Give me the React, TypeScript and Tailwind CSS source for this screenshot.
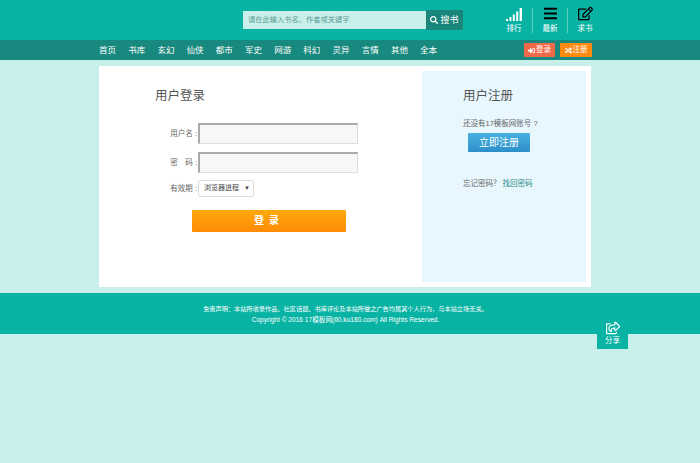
// Login page: teal header + nav, white card with login form and register panel, footer
import { FaSearch, FaBars, FaRegEdit, FaSignInAlt, FaRandom, FaRegShareSquare } from 'react-icons/fa';

const FONT = "font-['Liberation_Sans','Noto_Sans_CJK_SC',sans-serif]";

const NAV_ITEMS = ['首页', '书库', '玄幻', '仙侠', '都市', '军史', '网游', '科幻', '灵异', '言情', '其他', '全本'];

function SignalIcon() {
    return (
        <svg width="16" height="13" viewBox="0 0 16 13" fill="#fff">
            <rect x="0" y="11" width="2" height="2" />
            <rect x="3.4" y="9" width="2" height="4" />
            <rect x="6.8" y="6.5" width="2" height="6.5" />
            <rect x="10.2" y="3.5" width="2" height="9.5" />
            <rect x="13.6" y="0" width="2.4" height="13" />
        </svg>
    );
}

function TopLink({ icon, label, wide }: { icon: React.ReactNode; label: string; wide?: boolean }) {
    return (
        <div className={`${wide ? 'w-[36px]' : 'w-[34px]'} flex flex-col items-center`}>
            <div className="h-[14px] flex items-end">{icon}</div>
            <span className="mt-[3px] text-[7.5px] leading-[10px] text-white">{label}</span>
        </div>
    );
}

function Divider() {
    return <div className="w-px h-[25px] bg-[#5fd0c5]" />;
}

function FormRow({ label, children }: { label: string; children: React.ReactNode }) {
    return (
        <div className="flex items-center">
            <span className="w-[43px] pr-[1px] text-right text-[7.5px] whitespace-pre text-[#666]">{label}</span>
            {children}
        </div>
    );
}

function TextField() {
    return (
        <input
            type="text"
            className="w-[160px] h-[21px] bg-[#f7f7f7] border border-[#ddd] border-t-[#aaa] border-l-[#aaa] border-t-2 border-l-2"
        />
    );
}

export default function App() {
    return (
        <div className={`${FONT} w-[700px] h-[463px] overflow-hidden bg-[#c9efea] relative`}>
            {/* header */}
            <div className="h-[40px] bg-[#08b3a4] flex">
                <div className="ml-[243px] mt-[10px] h-[20px] flex items-center">
                    <div className="w-[183px] h-[18px] bg-[#c9efea] pl-[5px] text-[7.25px] leading-[18px] text-[#5a9c95]">
                        请在此输入书名、作者或关键字
                    </div>
                    <div className="w-[37px] h-[20px] bg-[#1a857b] rounded-r-[1px] flex items-center justify-center gap-[2px] text-white">
                        <FaSearch size={8} />
                        <span className="text-[9px] leading-none">搜书</span>
                    </div>
                </div>
                <div className="ml-[33px] mt-[8px] h-[25px] flex items-center">
                    <TopLink wide icon={<SignalIcon />} label="排行" />
                    <Divider />
                    <TopLink icon={<FaBars size={15} />} label="最新" />
                    <Divider />
                    <TopLink icon={<FaRegEdit size={15} />} label="求书" />
                </div>
            </div>

            {/* nav */}
            <div className="h-[20px] bg-[#17897e] flex items-center pl-[99px]">
                <div className="flex w-[425px]">
                    {NAV_ITEMS.map(n => (
                        <span key={n} className="w-[29.2px] shrink-0 text-[8.5px] leading-[20px] text-white">{n}</span>
                    ))}
                </div>
                <div className="flex gap-[5px]">
                    <div className="w-[31px] h-[14px] rounded-[1px] bg-[#f0694a] flex items-center justify-center gap-[1px] text-white">
                        <FaSignInAlt size={7} />
                        <span className="text-[7.5px] leading-none">登录</span>
                    </div>
                    <div className="w-[32px] h-[14px] rounded-[1px] bg-[#fb8a13] flex items-center justify-center gap-[1px] text-white">
                        <FaRandom size={7} />
                        <span className="text-[7.5px] leading-none">注册</span>
                    </div>
                </div>
            </div>

            {/* card */}
            <div className="mt-[6px] ml-[99px] w-[492px] h-[221px] bg-white p-[5px] flex">
                <div className="w-[318px] shrink-0 pl-[51px] pt-[16px]">
                    <h2 className="text-[12.5px] leading-[18px] font-normal text-[#555]">用户登录</h2>
                    <div className="mt-[18px] flex flex-col gap-[8px]">
                        <FormRow label="用户名 :">
                            <TextField />
                        </FormRow>
                        <FormRow label="密　码 :">
                            <TextField />
                        </FormRow>
                        <FormRow label="有效期 :">
                            <div className="w-[56px] h-[17px] bg-white border border-[#ddd] rounded-[2px] flex items-center justify-between pl-[5px] pr-[3px] text-[7px] text-[#444] -mt-[1px]">
                                <span>浏览器进程</span>
                                <span className="text-[6px]">▼</span>
                            </div>
                        </FormRow>
                    </div>
                    <div className="mt-[13px] ml-[37px] w-[154px] h-[22px] rounded-[1px] bg-gradient-to-b from-[#ffa90d] to-[#ff8a05] text-center text-[10px] leading-[22px] font-bold tracking-[5px] text-white">
                        登录
                    </div>
                </div>
                <div className="w-[165px] h-[211px] bg-[#e8f6fe] pl-[41px] pt-[16px]">
                    <h2 className="text-[12.5px] leading-[18px] font-normal text-[#555]">用户注册</h2>
                    <p className="mt-[13px] text-[7.5px] leading-[11px] text-[#666]">还没有17模板网账号 ?</p>
                    <div className="mt-[4px] ml-[5px] w-[62px] h-[19px] rounded-[1px] bg-gradient-to-b from-[#48b0de] to-[#2d8fc9] text-center text-[10px] leading-[19px] text-white">
                        立即注册
                    </div>
                    <p className="mt-[26px] text-[7.5px] leading-[11px] text-[#666]">
                        忘记密码？ <span className="text-[#2a8c7e]">找回密码</span>
                    </p>
                </div>
            </div>

            {/* footer */}
            <div className="mt-[6px] h-[41px] bg-[#08b3a4] pt-[10px] pr-[9px] text-center text-white leading-[11px]">
                <p className="text-[6.2px]">免责声明：本站所收录作品、社区话题、书库评论及本站所做之广告均属其个人行为，与本站立场无关。</p>
                <p className="text-[6.6px]">Copyright © 2016 17模板网(60.ku180.com) All Rights Reserved.</p>
            </div>

            {/* floating share */}
            <div className="absolute left-[597px] top-[320px] w-[31px] h-[29px] bg-[#08b3a4] flex flex-col items-center pt-[1px] text-white">
                <FaRegShareSquare size={14} />
                <span className="mt-[1px] text-[7.5px] leading-[10px]">分享</span>
            </div>
        </div>
    );
}
